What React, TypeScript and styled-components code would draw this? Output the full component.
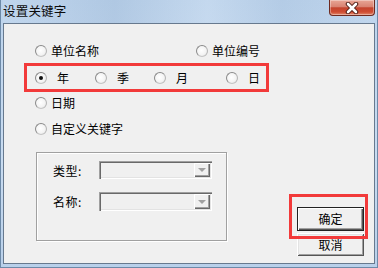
import React from 'react';
import styled, { createGlobalStyle } from 'styled-components';

const GlobalStyle = createGlobalStyle`
  html, body {
    margin: 0;
    padding: 0;
    width: 378px;
    height: 268px;
    overflow: hidden;
    background: #ffffff;
  }
  * {
    box-sizing: border-box;
  }
`;

const font = `"Noto Sans CJK SC", "Noto Sans", sans-serif`;

const Window = styled.div`
  width: 378px;
  height: 268px;
  display: flex;
  flex-direction: column;
  padding: 0 2px 3px 2px;
  border: 1px solid #6d8aa8;
  border-top: none;
  background: linear-gradient(to bottom, #bcd3ec 0%, #c9dcf1 60%, #b9d0ea 100%);
  font-family: ${font};
  font-size: 12px;
  color: #000;
`;

const TitleBar = styled.div`
  height: 23px;
  display: flex;
  justify-content: space-between;
  align-items: flex-start;
  background: linear-gradient(
    to right,
    rgba(255, 255, 255, 0.05) 0%,
    rgba(120, 150, 185, 0.18) 30%,
    rgba(255, 255, 255, 0.12) 55%,
    rgba(120, 150, 185, 0.12) 75%,
    rgba(255, 255, 255, 0.05) 100%
  );
`;

const Title = styled.span`
  line-height: 21px;
  font-size: 12.5px;
  letter-spacing: 0.2px;
  color: #0c0c0c;
`;

const CloseButton = styled.div`
  width: 46px;
  height: 16px;
  display: flex;
  align-items: center;
  justify-content: center;
  border: 1px solid #6e2a20;
  border-top: none;
  border-radius: 0 0 4px 4px;
  background: linear-gradient(
    to bottom,
    #e8a696 0%,
    #d98372 45%,
    #c4442e 52%,
    #cf4d33 80%,
    #e28a6e 100%
  );
  box-shadow: inset 0 0 0 1px rgba(255, 255, 255, 0.35);
`;

const Client = styled.div`
  flex: 1;
  display: flex;
  position: relative;
  border: 1px solid #67798e;
  background: #f0f0f0;
  padding: 16px 10px 7px 20px;
`;

const LeftColumn = styled.div`
  width: 245px;
  display: flex;
  flex-direction: column;
`;

const RightColumn = styled.div`
  flex: 1;
  display: flex;
  flex-direction: column;
  justify-content: flex-end;
  align-items: flex-end;
  gap: 2px;
`;

const OptionRow = styled.div<{ $columns?: string; $top?: number }>`
  height: 22px;
  display: grid;
  grid-template-columns: ${({ $columns }) => $columns || 'auto'};
  align-items: center;
  padding-left: 11px;
  margin-top: ${({ $top }) => $top || 0}px;
`;

const HighlightRow = styled.div`
  height: 29px;
  margin-top: 1px;
  display: grid;
  grid-template-columns: 60px 59px 72px auto;
  align-items: center;
  padding-left: 8px;
  border: 3px solid #f23a3a;
`;

const RadioLabel = styled.label<{ $gap: number }>`
  display: flex;
  align-items: center;
  gap: ${({ $gap }) => $gap}px;
  white-space: nowrap;
  line-height: 14px;
`;

const RadioCircle = styled.span<{ $checked?: boolean }>`
  width: 12px;
  height: 12px;
  border-radius: 50%;
  border: 1px solid #8a8a8a;
  border-right-color: #b5b5b5;
  border-bottom-color: #c4c4c4;
  background: radial-gradient(circle at 45% 45%, #ffffff 0%, #f4f4f4 55%, #dcdcdc 100%);
  display: flex;
  align-items: center;
  justify-content: center;

  &::after {
    content: '';
    width: 4px;
    height: 4px;
    border-radius: 50%;
    background: ${({ $checked }) => ($checked ? '#111' : 'transparent')};
  }
`;

const GroupBox = styled.div`
  margin: 12px 0 0 12px;
  width: 191px;
  height: 89px;
  border: 1px solid #a0a0a0;
  box-shadow: inset 1px 1px 0 #ffffff, 1px 1px 0 #ffffff;
  padding: 8px 0 0 16px;
  display: flex;
  flex-direction: column;
  gap: 13px;
`;

const FieldRow = styled.div<{ $height: number }>`
  display: grid;
  grid-template-columns: 46px 113px;
  align-items: center;
  height: ${({ $height }) => $height}px;
`;

const FieldLabel = styled.span`
  white-space: nowrap;
  letter-spacing: 0.5px;
`;

const Combo = styled.div`
  height: 100%;
  display: flex;
  justify-content: flex-end;
  align-items: stretch;
  padding: 2px;
  background: #f0f0f0;
  box-shadow: inset 1px 1px 0 #a0a0a0, inset 2px 2px 0 #696969, inset -1px -1px 0 #ffffff,
    inset -2px -2px 0 #e3e3e3;
`;

const DropButton = styled.div`
  width: 16px;
  display: flex;
  align-items: center;
  justify-content: center;
  background: #f0f0f0;
  box-shadow: inset 1px 1px 0 #ffffff, inset -1px -1px 0 #696969, inset -2px -2px 0 #a0a0a0;
`;

const Arrow = styled.span`
  width: 0;
  height: 0;
  border-left: 4px solid transparent;
  border-right: 4px solid transparent;
  border-top: 4px solid #a0a0a0;
`;

const ButtonWrap = styled.div`
  position: relative;
  z-index: 1;
`;

const Button = styled.div<{ $default?: boolean; $height: number }>`
  width: 67px;
  height: ${({ $height }) => $height}px;
  display: flex;
  align-items: center;
  justify-content: center;
  background: #f0f0f0;
  border: ${({ $default }) => ($default ? '1px solid #222' : 'none')};
  box-shadow: ${({ $default }) =>
    $default
      ? 'inset 1px 1px 0 #ffffff, inset -1px -1px 0 #555555, inset -2px -2px 0 #a0a0a0'
      : 'inset 1px 1px 0 #ffffff, inset -1px -1px 0 #555555, inset 2px 2px 0 #e3e3e3, inset -2px -2px 0 #a0a0a0'};
  font-size: 12px;
  line-height: 14px;
`;

const Annotation = styled.div`
  position: absolute;
  top: -13px;
  right: -4px;
  bottom: -8px;
  left: -8px;
  border: 3px solid #f23a3a;
  pointer-events: none;
`;

function Radio({ label, checked, gap = 4 }: { label: string; checked?: boolean; gap?: number }) {
  return (
    <RadioLabel $gap={gap}>
      <RadioCircle $checked={checked} />
      <span>{label}</span>
    </RadioLabel>
  );
}

function ComboBox() {
  return (
    <Combo>
      <DropButton>
        <Arrow />
      </DropButton>
    </Combo>
  );
}

export default function App() {
  return (
    <>
      <GlobalStyle />
      <Window>
        <TitleBar>
          <Title>设置关键字</Title>
          <CloseButton>
            <svg width="16" height="12" viewBox="0 0 16 12">
              <path d="M4 2 L12 10 M12 2 L4 10" stroke="#4a1810" strokeWidth="4.5" strokeLinecap="round" />
              <path d="M4 2 L12 10 M12 2 L4 10" stroke="#ffffff" strokeWidth="2.6" strokeLinecap="round" />
            </svg>
          </CloseButton>
        </TitleBar>
        <Client>
          <LeftColumn>
            <OptionRow $columns="161px auto">
              <Radio label="单位名称" />
              <Radio label="单位编号" />
            </OptionRow>
            <HighlightRow>
              <Radio label="年" checked gap={10} />
              <Radio label="季" gap={10} />
              <Radio label="月" gap={10} />
              <Radio label="日" gap={10} />
            </HighlightRow>
            <OptionRow>
              <Radio label="日期" />
            </OptionRow>
            <OptionRow $top={4}>
              <Radio label="自定义关键字" />
            </OptionRow>
            <GroupBox>
              <FieldRow $height={18}>
                <FieldLabel>类型:</FieldLabel>
                <ComboBox />
              </FieldRow>
              <FieldRow $height={19}>
                <FieldLabel>名称:</FieldLabel>
                <ComboBox />
              </FieldRow>
            </GroupBox>
          </LeftColumn>
          <RightColumn>
            <ButtonWrap>
              <Button $default $height={24}>确定</Button>
              <Annotation />
            </ButtonWrap>
            <Button $height={23}>取消</Button>
          </RightColumn>
        </Client>
      </Window>
    </>
  );
}
